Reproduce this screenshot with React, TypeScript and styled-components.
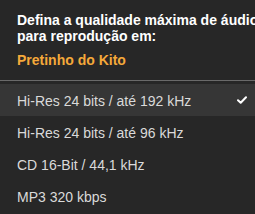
import React from "react";
import styled, { createGlobalStyle } from "styled-components";

const GlobalStyle = createGlobalStyle`
  html, body {
    margin: 0;
    padding: 0;
    background: #272727;
    overflow: hidden;
  }
  body {
    font-family: "Liberation Sans", Arial, Helvetica, sans-serif;
    -webkit-font-smoothing: antialiased;
  }
`;

const Panel = styled.div`
  width: 255px;
  height: 214px;
  display: flex;
  flex-direction: column;
  background: #272727;
  overflow: hidden;
`;

const Header = styled.div`
  padding: 12px 0 12px 17px;
  display: flex;
  flex-direction: column;
  gap: 8px;
`;

const Title = styled.div`
  font-size: 14px;
  font-weight: 700;
  line-height: 16px;
  color: #ffffff;
  white-space: nowrap;
`;

const Device = styled.div`
  font-size: 14px;
  font-weight: 700;
  line-height: 16px;
  color: #f5a93a;
`;

const Divider = styled.div`
  height: 1px;
  background: #6a6a6a;
  margin-bottom: 3px;
`;

const List = styled.ul`
  list-style: none;
  margin: 0;
  padding: 0;
`;

const Row = styled.li<{ $active?: boolean }>`
  height: 32px;
  box-sizing: border-box;
  padding: 2px 8px 0 17px;
  display: flex;
  align-items: center;
  justify-content: space-between;
  background: ${(p) => (p.$active ? "#363636" : "transparent")};
  color: #dadada;
  font-size: 14px;
  line-height: 30px;
  white-space: nowrap;
`;

const Check = () => (
  <svg width="10" height="8" viewBox="0 0 10 8" style={{ marginTop: -2 }}>
    <polyline
      points="1,4.2 3.7,6.8 9,1.2"
      fill="none"
      stroke="#ffffff"
      strokeWidth="2"
      strokeLinecap="round"
      strokeLinejoin="round"
    />
  </svg>
);

const options = [
  "Hi-Res 24 bits / até 192 kHz",
  "Hi-Res 24 bits / até 96 kHz",
  "CD 16-Bit / 44,1 kHz",
  "MP3 320 kbps",
];

const App = () => {
  const selected = 0;
  return (
    <>
      <GlobalStyle />
      <Panel>
        <Header>
          <Title>
            Defina a qualidade máxima de áudio
            <br />
            para reprodução em:
          </Title>
          <Device>Pretinho do Kito</Device>
        </Header>
        <Divider />
        <List>
          {options.map((label, i) => (
            <Row key={label} $active={i === selected}>
              <span>{label}</span>
              {i === selected && <Check />}
            </Row>
          ))}
        </List>
      </Panel>
    </>
  );
};

export default App;
